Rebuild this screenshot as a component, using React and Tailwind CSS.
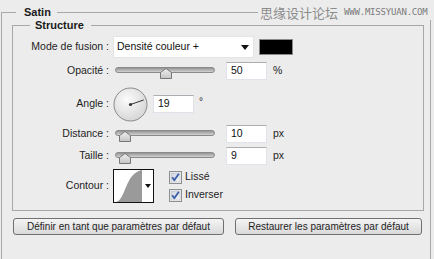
import React from "react";

const font = { fontFamily: '"Liberation Sans", Arial, sans-serif' };

function Thumb({ className }) {
  return (
    <svg className={`absolute ${className}`} width="12" height="11" viewBox="0 0 12 11">
      <defs>
        <linearGradient id="tg" x1="0" y1="0" x2="0" y2="1">
          <stop offset="0" stopColor="#f0f0f0" />
          <stop offset="1" stopColor="#c4c4c4" />
        </linearGradient>
      </defs>
      <path d="M0.5 4.5 L6 0.5 L11.5 4.5 L11.5 10.5 L0.5 10.5 Z" fill="url(#tg)" stroke="#777" strokeWidth="1" />
    </svg>
  );
}

function Slider({ thumb }) {
  return (
    <div className="relative w-[104px] h-[18px] shrink-0">
      <div className="absolute left-[2px] right-[2px] top-[5px] h-[6px] rounded-full border border-[#8a8a8a] bg-gradient-to-b from-[#959595] to-[#d2d2d2]" />
      <Thumb className={thumb} />
    </div>
  );
}

function NumInput({ value, w = "w-[41px]" }) {
  return (
    <div className={`${w} h-[18px] bg-white border border-[#e2e3ea] border-t-[#abadb3] flex items-center pl-[4px] text-[10.5px] text-[#111]`}>
      {value}
    </div>
  );
}

function Label({ children }) {
  return <div className="w-[97px] shrink-0 text-right pr-[1px] text-[10.5px] text-[#1e1e1e]">{children}</div>;
}

function Check({ label }) {
  return (
    <div className="flex items-center gap-[3px] h-[14px]">
      <svg width="13" height="13" viewBox="0 0 13 13">
        <defs>
          <linearGradient id="cg" x1="0" y1="0" x2="1" y2="1">
            <stop offset="0" stopColor="#cdd2dc" />
            <stop offset="1" stopColor="#f7f8fa" />
          </linearGradient>
        </defs>
        <rect x="0.5" y="0.5" width="12" height="12" fill="#f4f4f4" stroke="#8e8f8f" />
        <rect x="2" y="2" width="9" height="9" fill="url(#cg)" stroke="#b7bcc7" strokeWidth="0.6" />
        <path d="M3.2 6.2 L5.3 9.3 L9.8 2.8" fill="none" stroke="#3a5fa8" strokeWidth="1.8" strokeLinejoin="round" />
      </svg>
      <span className="text-[10.5px] text-[#1e1e1e]">{label}</span>
    </div>
  );
}

export default function App() {
  const a = (19 * Math.PI) / 180;
  const ex = 17.5 + 14 * Math.cos(a);
  const ey = 17.5 - 14 * Math.sin(a);
  return (
    <div className="relative w-[434px] h-[259px] overflow-hidden bg-[#ececec] pt-[6px]" style={font}>
      <fieldset className="ml-[1px] w-[430px] h-[280px] border border-[#a8a8a8] px-0 pb-0">
        <legend className="ml-[14px] px-[8px] pr-[6px] text-[11px] leading-[12px] font-bold text-[#1a1a1a]">Satin</legend>

        <fieldset className="ml-[10px] mt-[1px] w-[412px] h-[192px] border border-[#a8a8a8] p-0">
          <legend className="ml-[17px] px-[5px] pr-[7px] text-[11px] leading-[12px] font-bold text-[#1a1a1a]">Structure</legend>

          <div className="flex flex-col pt-[5px]">
            {/* Mode de fusion */}
            <div className="flex items-center h-[22px] gap-[3px]">
              <Label>Mode de fusion :</Label>
              <div className="w-[141px] h-[22px] bg-white border border-[#e4e4e4] flex items-center justify-between pl-[3px] pr-[4px] text-[10.5px] text-[#111]">
                <span>Densité couleur +</span>
                <svg width="8" height="5" viewBox="0 0 8 5"><path d="M0 0 H8 L4 5 Z" fill="#111" /></svg>
              </div>
              <div className="ml-[2px] w-[34px] h-[16px] bg-black border border-[#8a8a8a]" />
            </div>

            {/* Opacité */}
            <div className="flex items-center h-[18px] mt-[4px] gap-[3px]">
              <Label>Opacité :</Label>
              <Slider thumb="left-[47px] top-[6px]" />
              <div className="ml-[6px]"><NumInput value="50" /></div>
              <span className="ml-[3px] text-[10.5px] text-[#1e1e1e]">%</span>
            </div>

            {/* Angle */}
            <div className="flex items-center h-[34px] mt-[7px] gap-[3px]">
              <Label>Angle :</Label>
              <svg width="35" height="35" viewBox="0 0 35 35" className="shrink-0">
                <defs>
                  <radialGradient id="dg" cx="0.4" cy="0.35" r="0.7">
                    <stop offset="0" stopColor="#fbfbfb" />
                    <stop offset="1" stopColor="#d4d4d4" />
                  </radialGradient>
                </defs>
                <circle cx="17.5" cy="17.5" r="16.5" fill="url(#dg)" stroke="#8a8a8a" />
                <line x1="17.5" y1="17.5" x2={ex} y2={ey} stroke="#333" strokeWidth="1" />
                <circle cx="17.5" cy="17.5" r="1.6" fill="#333" />
              </svg>
              <div className="ml-[2px]"><NumInput value="19" /></div>
              <span className="ml-[2px] -mt-[6px] text-[10px] text-[#1e1e1e]">°</span>
            </div>

            {/* Distance */}
            <div className="flex items-center h-[18px] mt-[4px] gap-[3px]">
              <Label>Distance :</Label>
              <Slider thumb="left-[6px] top-[6px]" />
              <div className="ml-[6px]"><NumInput value="10" /></div>
              <span className="ml-[3px] text-[10.5px] text-[#1e1e1e]">px</span>
            </div>

            {/* Taille */}
            <div className="flex items-center h-[18px] mt-[4px] gap-[3px]">
              <Label>Taille :</Label>
              <Slider thumb="left-[6px] top-[6px]" />
              <div className="ml-[6px]"><NumInput value="9" /></div>
              <span className="ml-[3px] text-[10.5px] text-[#1e1e1e]">px</span>
            </div>

            {/* Contour */}
            <div className="flex items-center h-[34px] mt-[4px] gap-[3px]">
              <Label>Contour :</Label>
              <div className="w-[41px] h-[34px] bg-white border border-[#111] flex shrink-0">
                <svg width="28" height="32" viewBox="0 0 28 32">
                  <path d="M2 32 C 12 30 11 3 28 0 L28 32 Z" fill="#9a9a9a" />
                </svg>
                <div className="flex-1 flex items-center justify-center">
                  <svg width="6" height="4" viewBox="0 0 6 4"><path d="M0 0 H6 L3 4 Z" fill="#111" /></svg>
                </div>
              </div>
              <div className="ml-[12px] flex flex-col gap-[4px]">
                <Check label="Lissé" />
                <Check label="Inverser" />
              </div>
            </div>
          </div>
        </fieldset>

        <div className="flex mt-[7px] ml-[11px] gap-[11px]">
          <button className="w-[211px] h-[17px] rounded-[3px] border border-[#707070] bg-gradient-to-b from-[#f4f4f4] to-[#dadada] text-[10px] leading-none text-[#1e1e1e]">
            Définir en tant que paramètres par défaut
          </button>
          <button className="w-[187px] h-[17px] rounded-[3px] border border-[#707070] bg-gradient-to-b from-[#f4f4f4] to-[#dadada] text-[10px] leading-none text-[#1e1e1e]">
            Restaurer les paramètres par défaut
          </button>
        </div>
      </fieldset>

      <div className="absolute top-[4px] left-[258px] w-[176px] h-[16px] bg-[#ececec] flex items-center pl-[2px] gap-[6px]">
        <span className="text-[13px] leading-none text-[#8c8c8c]" style={{ fontFamily: '"Noto Sans CJK SC", sans-serif' }}>思缘设计论坛</span>
        <span className="text-[9px] leading-none text-[#7a7a7a] tracking-[-0.2px]" style={{ fontFamily: '"DejaVu Sans Mono", monospace' }}>WWW.MISSYUAN.COM</span>
      </div>
    </div>
  );
}
